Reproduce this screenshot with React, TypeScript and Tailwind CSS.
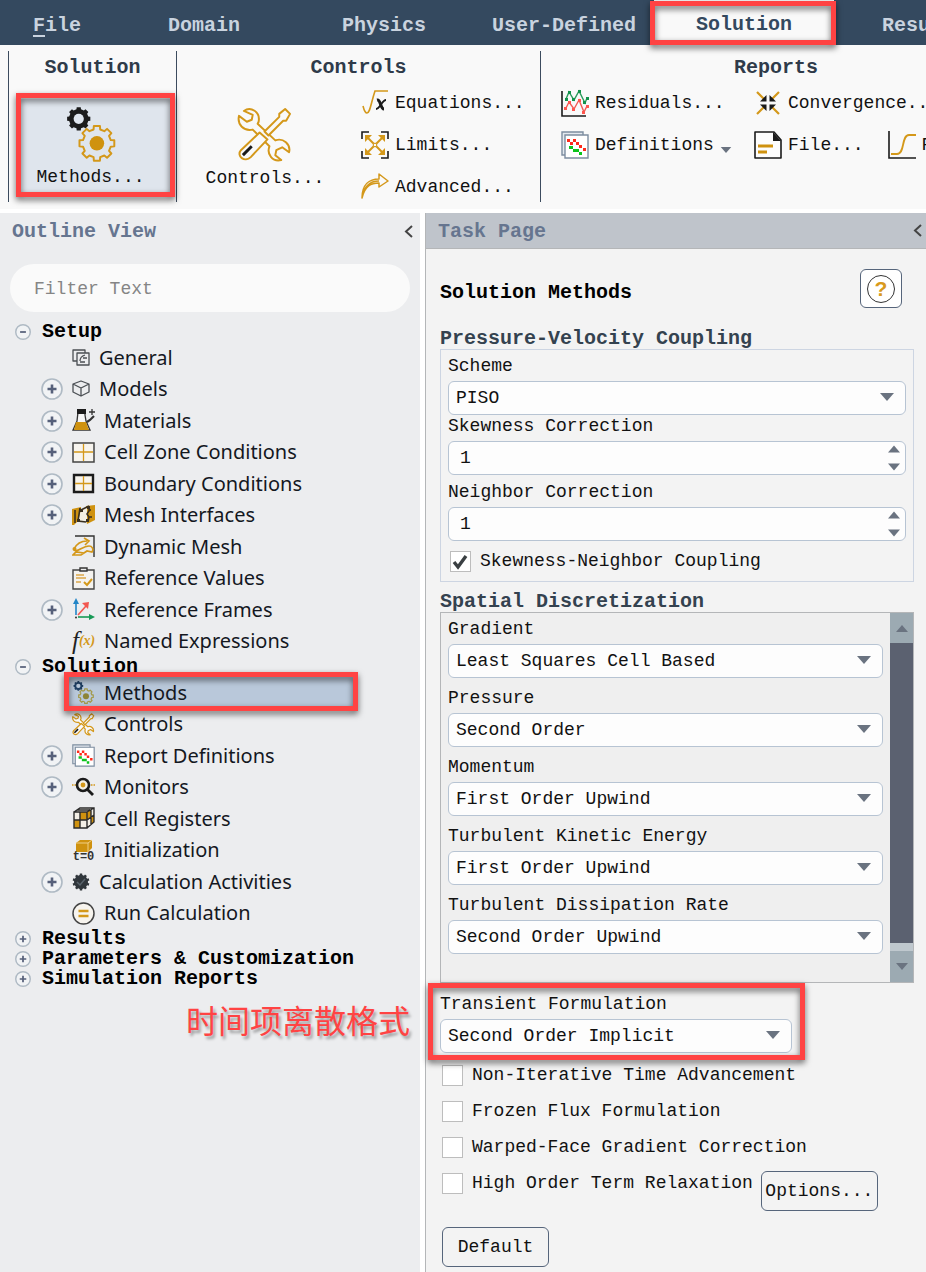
import { useId, useState } from "react";
import type { ReactNode } from "react";

const MONO = "font-['Liberation_Mono','Noto_Sans_CJK_SC',monospace]";
const GOLD = "#d4981a";
const INK = "#1b1b1b";

function gearPath(cx: number, cy: number, outer: number, inner: number, teeth: number) {
  const step = (Math.PI * 2) / teeth;
  const points: string[] = [];
  for (let i = 0; i < teeth; i++) {
    const a = i * step - Math.PI / 2;
    const corners: [number, number][] = [
      [-0.3, inner],
      [-0.22, outer],
      [0.22, outer],
      [0.3, inner],
    ];
    corners.forEach(([t, r]) => {
      points.push(`${(cx + r * Math.cos(a + t * step)).toFixed(2)} ${(cy + r * Math.sin(a + t * step)).toFixed(2)}`);
    });
  }
  return `M${points.join("L")}Z`;
}

/* ---------- drawings ---------- */

function GearsIcon({ className, small = false }: { className: string; small?: boolean }) {
  return (
    <svg viewBox="0 0 50 56" className={className} aria-hidden="true">
      <path d={gearPath(12.5, 12, 12, 10, 8)} fill={small ? "#1f3f63" : INK} />
      <circle cx="12.5" cy="12" r="5.2" fill={small ? "#b9c8da" : "#dfe5ed"} />
      <path
        d={gearPath(31, 37, 18, 14.5, 8)}
        fill="none"
        stroke={small ? "#a39a4c" : GOLD}
        strokeWidth={small ? 3 : 2}
        strokeLinejoin="round"
      />
      <circle cx="31" cy="37" r="7.4" fill={small ? "#8d8436" : "#cf920f"} />
    </svg>
  );
}

function ToolsIcon({ className, weight = 2 }: { className: string; weight?: number }) {
  return (
    <svg viewBox="-1 -1 57 57" className={className} aria-hidden="true" strokeLinejoin="round">
      <path
        d="M6 3C13-2 23 4 21 14l-1 2 18 17c8-3 16 4 14 12l-7-5-6 3-1 5 6 5c-9 2-15-6-12-14L15 22C6 24-1 17 1 8l8 6 5-2 1-5Z"
        fill="#f9f9f9"
        stroke={GOLD}
        strokeWidth={weight}
      />
      <path d="M48 1l5 5-4 7-3 0L31 28l-4-4L42 9V6Z" fill="#f9f9f9" stroke={GOLD} strokeWidth={weight} />
      <path d="M22 25l8 7-17 18c-6 6-15-1-10-7Z" fill="#f9f9f9" stroke={GOLD} strokeWidth={weight} />
      <path d="M5 48l9-9" stroke={INK} strokeWidth={weight + 1} />
    </svg>
  );
}

function RootIcon() {
  return (
    <svg viewBox="0 0 28 28" className="h-7 w-7" aria-hidden="true">
      <path d="M2 17c1 4 2 7 4 7 3 0 4-10 8-22h13" fill="none" stroke={GOLD} strokeWidth="1.6" />
      <path d="M16 11c4-1 3 9 7 9" fill="none" stroke={INK} strokeWidth="3" />
      <path d="M25 11c-4 0-6 9-10 9" fill="none" stroke={INK} strokeWidth="1.8" />
    </svg>
  );
}

function LimitsIcon() {
  return (
    <svg viewBox="0 0 28 28" className="h-7 w-7" aria-hidden="true" fill="none">
      <path d="M1 8V1h7M20 1h7v7M27 20v7h-7M8 27H1v-7" stroke={INK} strokeWidth="1.6" />
      <path d="M5 5l18 18M23 5L5 23" stroke={GOLD} strokeWidth="2" />
      <path d="M4 4h7L4 11ZM24 4v7l-7-7ZM24 24h-7l7-7ZM4 24v-7l7 7Z" fill={GOLD} />
      <circle cx="14" cy="14" r="1.8" fill="#f9f9f9" stroke={GOLD} />
    </svg>
  );
}

function AdvancedIcon() {
  return (
    <svg viewBox="0 0 28 28" className="h-7 w-7" aria-hidden="true" fill="none" stroke={GOLD} strokeWidth="1.5">
      <path d="M1 25C1 12 8 6 18 6V1l9 7-9 6v-4C10 10 4 13 1 25ZM1 25C3 13 9 8 18 8" strokeLinejoin="round" />
    </svg>
  );
}

function ResidualsIcon() {
  return (
    <svg viewBox="0 0 28 28" className="h-7 w-7" aria-hidden="true" fill="none">
      <path d="M1 2v25h24" stroke={INK} strokeWidth="1.6" />
      <path d="M5 10l3-7 5 8 5-9 6 12 2-5" stroke="#2c9c5c" strokeWidth="1.4" />
      <path d="M5 19l3-6 5 7 5-9 5 12 3-6" stroke="#f25b52" strokeWidth="1.4" />
      <path
        d="M4 9h3v3H4ZM7 2h3v3H7ZM11 9h3v3h-3ZM17 1h3v3h-3ZM22 12h3v3h-3ZM25 8h3v3h-3Z"
        fill="#12934b"
      />
      <path
        d="M3 18h3v3H3ZM7 12h3v3H7ZM11 19h3v3h-3ZM17 10h3v3h-3ZM21 22h3v3h-3ZM25 16h3v3h-3Z"
        fill="#ff564e"
      />
    </svg>
  );
}

function DefinitionsIcon({ className }: { className: string }) {
  return (
    <svg viewBox="0 0 28 28" className={className} aria-hidden="true">
      <path d="M1 1h21v23H1Z" fill="#e4e9ef" stroke="#7d8da0" strokeWidth="1.4" />
      <path d="M4 4h23v23H4Z" fill="#fff" stroke="#7d8da0" strokeWidth="1.4" />
      <path
        d="M6 8h3v3H6ZM9 11h3v3H9ZM12 8h3v3h-3ZM15 11h3v3h-3ZM18 14h3v3h-3ZM22 17h3v3h-3Z"
        fill="#ff2a1a"
      />
      <path d="M8 15h4v3H8ZM12 18h6v3h-6ZM18 21h3v3h-3Z" fill="#0cc41c" />
    </svg>
  );
}

function ConvergenceIcon() {
  return (
    <svg viewBox="0 0 24 24" className="mx-0.5 h-6 w-6" aria-hidden="true">
      <path d="M1 1l7 7M23 1l-7 7M1 23l7-7M23 23l-7-7" stroke={GOLD} strokeWidth="2.2" />
      <path d="M10.500 4v6.500H4ZM13.500 4v6.500H20ZM10.500 20v-6.500H4ZM13.500 20v-6.500H20Z" fill={INK} />
    </svg>
  );
}

function FileIcon() {
  return (
    <svg viewBox="0 0 28 28" className="h-7 w-7" aria-hidden="true">
      <path d="M1 1h19l7 8v18H1Z" fill="#fdfdfd" stroke={INK} strokeWidth="1.6" strokeLinejoin="round" />
      <path d="M19 1v9h8Z" fill={INK} />
      <path d="M4 15h15M4 21h9" stroke="#cf920f" strokeWidth="3" />
    </svg>
  );
}

function PlotIcon() {
  return (
    <svg viewBox="0 0 28 28" className="h-7 w-7" aria-hidden="true" fill="none">
      <path d="M1 0v27h27" stroke={INK} strokeWidth="1.6" />
      <path d="M3 23h6c4 0 5-4 6-9s2-10 6-10h7" stroke={GOLD} strokeWidth="1.8" />
    </svg>
  );
}

function Caret({ className, up = false }: { className: string; up?: boolean }) {
  return (
    <svg viewBox="0 0 14 8" className={className} aria-hidden="true">
      <path d={up ? "M0 8h14L7 0Z" : "M0 0h14L7 8Z"} fill="#6a7380" />
    </svg>
  );
}

const SHEET = "h-[23px] w-[23px] shrink-0";
const CHIP = "h-[18px] w-[18px] shrink-0";

function TreeIcon({ kind }: { kind: string }) {
  switch (kind) {
    case "general":
      return (
        <svg viewBox="0 0 18 18" className={CHIP} fill="none" stroke="#4b4f54" strokeWidth="1.3">
          <path d="M5 12H1V1h12v3M5 4h12v12H5Z" strokeLinejoin="round" />
          <path d="M8 12c0-4 2-5 5-6M8 13h5M11 9h4" />
        </svg>
      );
    case "models":
      return (
        <svg viewBox="0 0 18 18" className={CHIP} fill="none" stroke="#4b4f54" strokeWidth="1.3">
          <path d="M9 1l8 3v8l-8 4-8-4V4ZM1 4l8 4 8-4M9 8v8" strokeLinejoin="round" />
        </svg>
      );
    case "materials":
      return (
        <svg viewBox="0 0 23 23" className={SHEET} fill="none">
          <path d="M6 3h7v3l1 6 4 9H1l4-9Z" fill="#f6f6f6" stroke="#333" strokeWidth="1.3" />
          <path d="M4 13h10l3 8H2Z" fill="#cf920f" />
          <path d="M5 0h9v5H5Z" fill={INK} />
          <path d="M20 0v6M17 3h6" stroke="#333" strokeWidth="1.3" />
          <path d="M15 13l3-2 4-4" stroke="#333" strokeWidth="2.2" />
        </svg>
      );
    case "cell":
      return (
        <svg viewBox="0 0 23 23" className={SHEET} fill="none">
          <path d="M1 2h21v19H1Z" fill="#f7f4ee" stroke="#444" strokeWidth="1.5" />
          <path d="M11.500 3v17M2 11h19" stroke={GOLD} strokeWidth="1.3" />
        </svg>
      );
    case "boundary":
      return (
        <svg viewBox="0 0 23 23" className={SHEET} fill="none">
          <path d="M2 3h19v17H2Z" fill="#f7f4ee" stroke={INK} strokeWidth="2.4" />
          <path d="M11.500 4v15M3 11.500h17" stroke={GOLD} strokeWidth="1.3" />
        </svg>
      );
    case "mesh":
      return (
        <svg viewBox="0 0 23 23" className={SHEET} fill="none">
          <path d="M0 5l9-2v3L6 17l-4 4H0ZM14 2l9-1v15l-8 4-1-4Z" fill="#cf920f" />
          <path d="M9 6l6-2v12l-8 2Z" fill="#f4efe2" />
          <path d="M3 6v13M8 4L6 17l8 1M9 6l8-4M17 3v4l-2 3 2 3-1 5M19 6h-2M20 13h-3" stroke="#3a3020" strokeWidth="1.6" />
          <path d="M8 5h3v3H8ZM15 2h3v3h-3ZM5 15h3v3H5ZM14 15h3v3h-3Z" fill="#3a3020" />
        </svg>
      );
    case "dynamic":
      return (
        <svg viewBox="0 0 23 23" className={SHEET} fill="none">
          <path d="M3 1h19v21" stroke="#333" strokeWidth="1.4" />
          <path d="M2 14C5 8 9 6 15 6M12 3l5 3-4 4M2 15c4 3 8-4 15-4 3 0 5 3 3 6l-5-1-6 4H1l3-3 8 1" stroke={GOLD} strokeWidth="1.7" />
          <circle cx="2.500" cy="14" r="2" fill={GOLD} />
        </svg>
      );
    case "values":
      return (
        <svg viewBox="0 0 23 23" className={SHEET} fill="none">
          <path d="M1 3h21v19H1Z" fill="#f5f3ef" stroke="#444" strokeWidth="1.4" />
          <path d="M8 1h7v3H8Z" fill="#eee" stroke="#333" strokeWidth="1.4" />
          <path d="M4 8h8M4 11h10M4 15h5" stroke="#dba84a" strokeWidth="1.4" />
          <path d="M12 15l3 3 5-6" stroke={GOLD} strokeWidth="2" />
        </svg>
      );
    case "frames":
      return (
        <svg viewBox="0 0 23 23" className={SHEET} fill="none">
          <path d="M4 17V4" stroke="#2285c7" strokeWidth="1.6" />
          <path d="M4 0l3 6H1Z" fill="#2285c7" />
          <path d="M6 17l8-9" stroke="#f2564f" strokeWidth="1.6" />
          <path d="M17 4l-1 7-6-6Z" fill="#f2564f" />
          <path d="M6 19h12" stroke="#179a56" strokeWidth="1.6" />
          <path d="M23 19l-6 3v-6Z" fill="#179a56" />
          <circle cx="4" cy="19.500" r="1" fill="#333" />
        </svg>
      );
    case "expressions":
      return (
        <span className="flex w-[23px] shrink-0 items-center font-['Liberation_Serif',serif] italic leading-[22px]">
          <span className="text-[25px] text-[#222]">f</span>
          <span className="text-[14px] font-bold text-[#d4981a]">(x)</span>
        </span>
      );
    case "methods":
      return <GearsIcon className="h-[23px] w-[23px] shrink-0" small />;
    case "controls":
      return <ToolsIcon className="h-[23px] w-[23px] shrink-0" weight={3} />;
    case "definitions":
      return <DefinitionsIcon className="h-[23px] w-[23px] shrink-0" />;
    case "monitors":
      return (
        <svg viewBox="0 0 23 23" className={SHEET} fill="none">
          <path d="M0 9h4M19 9h4" stroke={GOLD} strokeWidth="1.6" strokeDasharray="1.500 1" />
          <circle cx="11" cy="9" r="6" stroke={INK} strokeWidth="2.6" fill="#f5f1e6" />
          <path d="M15 13l6 6" stroke={INK} strokeWidth="2.8" />
          <circle cx="11" cy="9" r="2.400" fill={GOLD} />
        </svg>
      );
    case "registers":
      return (
        <svg viewBox="0 0 23 23" className={SHEET} fill="none">
          <path d="M2 5l6-4h14v14l-7 6H2Z" fill="#f3efe6" />
          <path d="M8 5h7v8H8ZM2 13h6v8H2ZM15 5l4-2v7l-4 3ZM19 10l3-2v7l-3 3Z" fill="#cf920f" />
          <path d="M2 5h13v16H2ZM2 5l6-4h14v14l-7 6M15 5l7-4M8 5v16M2 13h13l7-5M19 3v15M5 3h13" stroke="#2b2b2b" strokeWidth="1.4" />
        </svg>
      );
    case "initialization":
      return (
        <span className="flex w-[23px] shrink-0 flex-col items-center">
          <svg viewBox="0 0 18 14" className="h-3.5 w-[18px]">
            <path d="M1 4l4-3h12v8l-4 4H1Z" fill="#cf920f" />
            <path d="M1 4h12v9M13 4l4-3" fill="none" stroke="#f0cf86" />
          </svg>
          <span className="font-['Liberation_Mono',monospace] text-[12px] font-bold leading-[9px] text-[#333]">t=0</span>
        </span>
      );
    case "activities":
      return (
        <svg viewBox="0 0 18 18" className={CHIP} fill="none">
          <path d={gearPath(9, 9, 8.5, 7, 10)} fill="#30363b" />
          <path d="M5 9l3 3 5-6" stroke="#59636b" strokeWidth="1.5" />
        </svg>
      );
    default:
      return (
        <svg viewBox="0 0 23 23" className={SHEET} fill="none">
          <circle cx="11.500" cy="11.500" r="10.500" fill="#f7f4ee" stroke="#444" strokeWidth="1.5" />
          <path d="M6.500 9h10M6.500 14h10" stroke={GOLD} strokeWidth="2.4" />
        </svg>
      );
  }
}

/* ---------- shared pieces ---------- */

function Marker({ className }: { className: string }) {
  return (
    <span
      aria-hidden="true"
      className={`pointer-events-none absolute z-10 border-5 border-[#ff4343] drop-shadow-[0_3px_3px_rgba(0,0,0,0.6)] ${className}`}
    />
  );
}

function Toggle({ open, large = false, label }: { open: boolean; large?: boolean; label: string }) {
  return (
    <button type="button" aria-label={label} aria-expanded={open} className="shrink-0">
      <svg viewBox="0 0 22 22" className={large ? "h-[22px] w-[22px]" : "h-4 w-4"} fill="none">
        <circle cx="11" cy="11" r="10" fill="#f1f3f5" stroke="#afbac4" strokeWidth={large ? 1.6 : 2} />
        <path d={open ? "M7 11h8" : "M6.500 11h9M11 6.500v9"} stroke="#56607a" strokeWidth={large ? 2.6 : 2.4} />
      </svg>
    </button>
  );
}

/* ---------- ribbon ---------- */

const TABS = ["Domain", "Physics", "User-Defined", "Solution", "Results"];

function TabBar() {
  return (
    <nav className="flex h-[45px] items-stretch overflow-hidden bg-[#34495f] text-[20px] font-bold text-[#c9d3df]">
      <button type="button" className="w-[114px] shrink-0 pt-1.5">
        <span className="underline underline-offset-4">F</span>ile
      </button>
      {TABS.map((tab) =>
        tab === "Solution" ? (
          <button key={tab} type="button" aria-current="page" className="w-[180px] shrink-0 bg-[#f9f9f9] pt-1 text-[#34495f]">
            {tab}
          </button>
        ) : (
          <button key={tab} type="button" className="w-[180px] shrink-0 pt-1.5">
            {tab}
          </button>
        ),
      )}
    </nav>
  );
}

function RibbonButton({ icon, children }: { icon: ReactNode; children: ReactNode }) {
  return (
    <button type="button" className="flex h-[42px] shrink-0 items-center gap-1.5 whitespace-nowrap">
      {icon}
      {children}
    </button>
  );
}

function Ribbon() {
  const title = "h-8 text-center text-[20px] leading-[34px] font-bold text-[#2f3b4a]";
  return (
    <div className="overflow-hidden border-b-4 border-white bg-[#f9f9f9] pl-2 text-[18px] text-[#111]">
      <div className="mt-1.5 mb-[7px] flex h-[151px]">
        <section className="w-[169px] shrink-0 border-x border-[#3c4b5e]">
          <h2 className={title}>Solution</h2>
          <button
            type="button"
            className="relative mt-4 ml-3 flex h-[93px] w-[149px] flex-col items-center bg-[#dfe5ed] pt-2 pr-2.5"
          >
            <Marker className="-top-1.5 -left-[5px] h-[104px] w-[159px]" />
            <GearsIcon className="h-14 w-[50px]" />
            <span className="leading-[30px]">Methods...</span>
          </button>
        </section>
        <section className="w-[364px] shrink-0 border-r border-[#3c4b5e]">
          <h2 className={title}>Controls</h2>
          <div className="flex">
            <button type="button" className="ml-7 flex w-[120px] flex-col items-center pt-6">
              <ToolsIcon className="h-14 w-14" />
              <span className="leading-[30px]">Controls...</span>
            </button>
            <div className="-mt-px ml-9">
              <RibbonButton icon={<RootIcon />}>Equations...</RibbonButton>
              <RibbonButton icon={<LimitsIcon />}>Limits...</RibbonButton>
              <RibbonButton icon={<AdvancedIcon />}>Advanced...</RibbonButton>
            </div>
          </div>
        </section>
        <section className="w-[470px] shrink-0">
          <h2 className={title}>Reports</h2>
          <div className="-mt-px flex pl-5">
            <div className="w-[193px] shrink-0">
              <RibbonButton icon={<ResidualsIcon />}>Residuals...</RibbonButton>
              <RibbonButton icon={<DefinitionsIcon className="h-7 w-7" />}>
                Definitions
                <Caret className="mt-2.5 h-1.5 w-3" />
              </RibbonButton>
            </div>
            <div>
              <RibbonButton icon={<ConvergenceIcon />}>Convergence...</RibbonButton>
              <div className="flex gap-6">
                <RibbonButton icon={<FileIcon />}>File...</RibbonButton>
                <RibbonButton icon={<PlotIcon />}>Plots...</RibbonButton>
              </div>
            </div>
          </div>
        </section>
      </div>
    </div>
  );
}

/* ---------- outline ---------- */

type Leaf = { label: string; icon: string; expandable?: boolean; selected?: boolean };

const SETUP: Leaf[] = [
  { label: "General", icon: "general" },
  { label: "Models", icon: "models", expandable: true },
  { label: "Materials", icon: "materials", expandable: true },
  { label: "Cell Zone Conditions", icon: "cell", expandable: true },
  { label: "Boundary Conditions", icon: "boundary", expandable: true },
  { label: "Mesh Interfaces", icon: "mesh", expandable: true },
  { label: "Dynamic Mesh", icon: "dynamic" },
  { label: "Reference Values", icon: "values" },
  { label: "Reference Frames", icon: "frames", expandable: true },
  { label: "Named Expressions", icon: "expressions" },
];

const SOLUTION: Leaf[] = [
  { label: "Methods", icon: "methods", selected: true },
  { label: "Controls", icon: "controls" },
  { label: "Report Definitions", icon: "definitions", expandable: true },
  { label: "Monitors", icon: "monitors", expandable: true },
  { label: "Cell Registers", icon: "registers" },
  { label: "Initialization", icon: "initialization" },
  { label: "Calculation Activities", icon: "activities", expandable: true },
  { label: "Run Calculation", icon: "run" },
];

function Branch({ label, items }: { label: string; items?: Leaf[] }) {
  return (
    <li>
      <div className="flex h-5 items-center gap-[11px] pl-[15px] text-[20px] leading-5 font-bold text-black">
        <Toggle open={Boolean(items)} label={label} />
        {label}
      </div>
      {items && (
        <ul className="font-['Noto_Sans',sans-serif] text-[20px] text-[#14181f]">
          {items.map((leaf) => (
            <li key={leaf.label} className="relative flex h-[31px] items-center pl-[41px] even:h-8">
              {leaf.selected && (
                <>
                  <span className="absolute inset-y-0 right-[66px] left-[68px] bg-[#b9c8da]" />
                  <Marker className="-top-[5px] right-[62px] left-16 h-[39px]" />
                </>
              )}
              <span className="relative flex items-center gap-[9px]">
                <span className="flex w-[22px]">{leaf.expandable && <Toggle open={false} large label={leaf.label} />}</span>
                <TreeIcon kind={leaf.icon} />
                {leaf.label}
              </span>
            </li>
          ))}
        </ul>
      )}
    </li>
  );
}

function CollapseButton() {
  return (
    <button type="button" aria-label="Collapse" className="shrink-0">
      <svg viewBox="0 0 9 13" className="h-[13px] w-[9px]" fill="none">
        <path d="M8 1L2 6.500l6 5.500" stroke="#444" strokeWidth="2" />
      </svg>
    </button>
  );
}

function OutlineView() {
  return (
    <aside className="w-[420px] shrink-0 bg-[#ecedef]">
      <header className="flex h-9 items-center justify-between pr-[7px] pl-3">
        <h2 className="pt-0.5 text-[20px] font-bold text-[#66758f]">Outline View</h2>
        <CollapseButton />
      </header>
      <div className="px-2.5 pt-[15px] pb-2.5">
        <input
          type="search"
          aria-label="Filter Text"
          placeholder="Filter Text"
          className="block h-12 w-full rounded-full bg-[#fafafa] px-6 pt-0.5 text-[18px] outline-none placeholder:text-[#858585]"
        />
      </div>
      <ul>
        <Branch label="Setup" items={SETUP} />
        <Branch label="Solution" items={SOLUTION} />
        <Branch label="Results" />
        <Branch label="Parameters & Customization" />
        <Branch label="Simulation Reports" />
      </ul>
      <p className="mt-1.5 pr-2.5 text-right font-['Noto_Sans_CJK_SC',sans-serif] text-[32px] leading-12 text-[#ff4343] [text-shadow:2px_3px_3px_rgba(0,0,0,0.35)]">
        时间项离散格式
      </p>
    </aside>
  );
}

/* ---------- task page ---------- */

function SelectField({ label, value, options }: { label: string; value: string; options: string[] }) {
  const id = useId();
  const [current, setCurrent] = useState(value);
  return (
    <div>
      <label htmlFor={id} className="block h-[26px] leading-[22px]">
        {label}
      </label>
      <div className="relative">
        <select
          id={id}
          value={current}
          onChange={(e) => setCurrent(e.target.value)}
          className="block h-[34px] w-full appearance-none rounded-md border border-[#b7c4d3] bg-[#fdfdfd] pl-[7px] text-[18px] outline-none"
        >
          {options.map((o) => (
            <option key={o}>{o}</option>
          ))}
        </select>
        <Caret className="pointer-events-none absolute top-3 right-3 h-2 w-3.5" />
      </div>
    </div>
  );
}

function SpinField({ label }: { label: string }) {
  const id = useId();
  const [value, setValue] = useState(1);
  return (
    <div>
      <label htmlFor={id} className="block h-[26px] leading-[22px]">
        {label}
      </label>
      <div className="relative">
        <input
          id={id}
          inputMode="numeric"
          value={value}
          onChange={(e) => setValue(Number(e.target.value) || 0)}
          className="block h-[34px] w-full rounded-md border border-[#b7c4d3] bg-[#fdfdfd] pl-[11px] text-[18px] outline-none"
        />
        <div className="absolute inset-y-1 right-1.5 flex flex-col justify-between">
          <button type="button" aria-label="Increase" onClick={() => setValue(value + 1)}>
            <Caret up className="h-2 w-3" />
          </button>
          <button type="button" aria-label="Decrease" onClick={() => setValue(value - 1)}>
            <Caret className="h-2 w-3" />
          </button>
        </div>
      </div>
    </div>
  );
}

function CheckField({ label, initial = false }: { label: string; initial?: boolean }) {
  const [on, setOn] = useState(initial);
  return (
    <label className="flex items-center gap-[9px] leading-6">
      <span className="relative flex">
        <input
          type="checkbox"
          checked={on}
          onChange={() => setOn(!on)}
          className="h-[21px] w-[21px] appearance-none border border-[#bdbdbd] bg-white"
        />
        {on && (
          <svg viewBox="0 0 21 21" className="pointer-events-none absolute inset-0 h-[21px] w-[21px]" fill="none">
            <path d="M4 11l4 5L16 5" stroke="#3a3f42" strokeWidth="3.4" />
          </svg>
        )}
      </span>
      {label}
    </label>
  );
}

const SCHEMES = ["First Order Upwind", "Second Order Upwind"];

function TaskPage() {
  const heading = "text-[20px] font-bold leading-5 text-[#34424f]";
  return (
    <main className="min-w-0 flex-1 border-l border-[#b4b6b8] bg-[#f3f3f3]">
      <header className="flex h-9 items-center justify-between border-b border-[#b4b6b8] bg-[#bfc4cb] pr-1 pl-3">
        <h2 className="pt-0.5 text-[20px] font-bold text-[#66758f]">Task Page</h2>
        <CollapseButton />
      </header>
      <div className="pr-3 pb-1 pl-3.5 text-[18px] text-[#111]">
        <div className="flex items-start justify-between pt-5 pr-3">
          <h1 className="pt-2 text-[20px] leading-8 font-bold text-black">Solution Methods</h1>
          <button
            type="button"
            aria-label="Help"
            className="flex h-[39px] w-[42px] items-center justify-center rounded-md border border-[#56657b] bg-white"
          >
            <span className="flex h-7 w-7 items-center justify-center rounded-full border border-[#333] font-['Liberation_Sans',sans-serif] text-[21px] leading-6 font-bold text-[#d99a1c]">
              ?
            </span>
          </button>
        </div>

        <h3 className={`mt-5 ${heading}`}>Pressure-Velocity Coupling</h3>
        <div className="border border-[#cdd5e2] px-[7px] pt-[5px] pb-2">
          <SelectField label="Scheme" value="PISO" options={["PISO", "SIMPLE", "SIMPLEC", "Coupled"]} />
          <SpinField label="Skewness Correction" />
          <div className="mt-1.5">
            <SpinField label="Neighbor Correction" />
          </div>
          <div className="pt-2 pl-0.5">
            <CheckField label="Skewness-Neighbor Coupling" initial />
          </div>
        </div>

        <h3 className={`mt-2.5 ${heading}`}>Spatial Discretization</h3>
        <div className="flex border border-[#b4b6b8] bg-[#efefef]">
          <div className="flex min-w-0 flex-1 flex-col gap-[9px] px-[7px] pt-[5px] pb-7">
            <SelectField label="Gradient" value="Least Squares Cell Based" options={["Least Squares Cell Based", "Green-Gauss Node Based"]} />
            <SelectField label="Pressure" value="Second Order" options={["Second Order", "PRESTO!"]} />
            <SelectField label="Momentum" value="First Order Upwind" options={SCHEMES} />
            <SelectField label="Turbulent Kinetic Energy" value="First Order Upwind" options={SCHEMES} />
            <SelectField label="Turbulent Dissipation Rate" value="Second Order Upwind" options={SCHEMES} />
          </div>
          <div className="flex w-[23px] shrink-0 flex-col bg-[#bfc8ce]">
            <button type="button" aria-label="Scroll up" className="flex h-[30px] items-center justify-center bg-[#9caab2]">
              <Caret up className="h-[7px] w-3" />
            </button>
            <div className="mb-2 flex-1 bg-[#5b6170]" />
            <button type="button" aria-label="Scroll down" className="flex h-[31px] items-center justify-center bg-[#9caab2]">
              <Caret className="h-[7px] w-3" />
            </button>
          </div>
        </div>

        <div className="relative w-[352px] max-w-full pt-2.5">
          <Marker className="-right-[13px] -bottom-[7px] -left-3 h-[77px]" />
          <SelectField label="Transient Formulation" value="Second Order Implicit" options={["Second Order Implicit", "First Order Implicit"]} />
        </div>

        <div className="flex flex-col gap-3 pt-2.5 pl-0.5">
          <CheckField label="Non-Iterative Time Advancement" />
          <CheckField label="Frozen Flux Formulation" />
          <CheckField label="Warped-Face Gradient Correction" />
          <div className="flex items-start gap-2">
            <CheckField label="High Order Term Relaxation" />
            <button type="button" className="h-10 w-[117px] rounded-md border border-[#56657b]">
              Options...
            </button>
          </div>
          <button type="button" className="mt-1 h-10 w-[107px] rounded-md border border-[#56657b]">
            Default
          </button>
        </div>
      </div>
    </main>
  );
}

export default function App() {
  return (
    <div className={`flex min-h-screen flex-col overflow-x-hidden bg-white ${MONO}`}>
      <div className="relative">
        <TabBar />
        <Marker className="top-px left-[650px] h-[44px] w-[186px]" />
      </div>
      <Ribbon />
      <div className="flex flex-1 gap-[5px]">
        <OutlineView />
        <TaskPage />
      </div>
    </div>
  );
}
